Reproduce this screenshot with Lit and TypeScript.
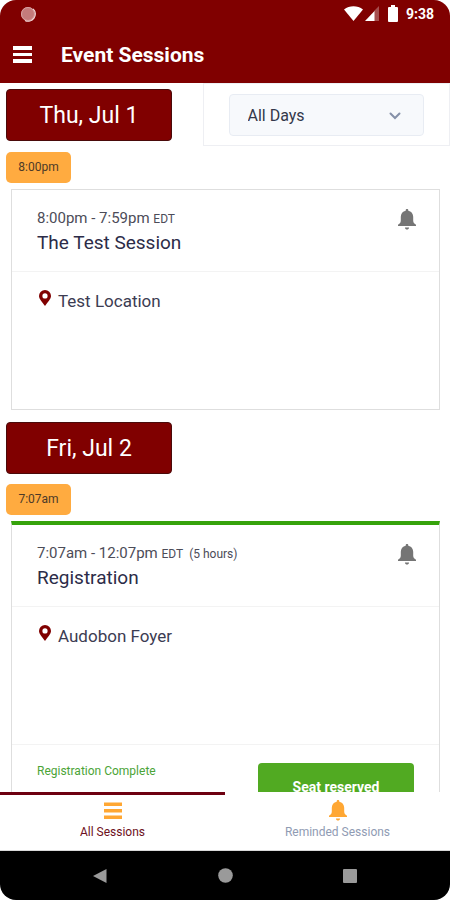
import { LitElement, html, css, svg, nothing } from "lit";
import { customElement, property, state } from "lit/decorators.js";
import { classMap } from "lit/directives/class-map.js";

interface Session {
  start: string;
  range: string;
  zone: string;
  duration?: string;
  title: string;
  location: string;
  status?: string;
}

interface Day {
  label: string;
  sessions: Session[];
}

const DAYS: Day[] = [
  {
    label: "Thu, Jul 1",
    sessions: [
      {
        start: "8:00pm",
        range: "8:00pm - 7:59pm",
        zone: "EDT",
        title: "The Test Session",
        location: "Test Location",
      },
    ],
  },
  {
    label: "Fri, Jul 2",
    sessions: [
      {
        start: "7:07am",
        range: "7:07am - 12:07pm",
        zone: "EDT",
        duration: "(5 hours)",
        title: "Registration",
        location: "Audobon Foyer",
        status: "Registration Complete",
      },
    ],
  },
];

const bell = svg`<path fill="currentColor" d="M9 0c.8 0 1.300.5 1.300 1.300v.4c3 .6 4.900 3 4.900 6.100v3.700c0 1.800.8 3.200 2.800 4.200v1.300H0v-1.300c2-1 2.800-2.400 2.800-4.200V7.800c0-3.100 1.900-5.500 4.900-6.100v-.4C7.700.5 8.200 0 9 0zM6.900 18.400h4.200c-.2 1.400-1 2.100-2.100 2.100s-1.900-.7-2.100-2.100z"/>`;

@customElement("session-card")
export class SessionCard extends LitElement {
  @property({ attribute: false }) session!: Session;

  static styles = css`
    :host {
      display: block;
      margin: 6px 10px 0 11px;
    }
    .card {
      border: 1px solid #dedede;
      background: #fff;
    }
    .reserved {
      border-top: 4px solid #36a30c;
    }
    .head {
      display: flex;
      justify-content: space-between;
      align-items: flex-start;
      padding: 16px 23px 16px 25px;
      border-bottom: 1px solid #f3f3f3;
    }
    .when {
      margin: 0;
      font-size: 15px;
      line-height: 24px;
      color: #4c4c58;
    }
    .zone {
      font-size: 12px;
    }
    .title {
      margin: 0;
      font-size: 19px;
      font-weight: 400;
      line-height: 24px;
      color: #2c2c48;
    }
    .remind {
      display: flex;
      padding: 0;
      margin-top: 3px;
      border: 0;
      background: none;
      color: #757575;
    }
    .body {
      display: flex;
      align-items: flex-start;
      gap: 7px;
      min-height: 120px;
      padding: 17px 25px 0 27px;
      font-size: 17px;
      line-height: 24px;
      color: #3c3c52;
    }
    .pin {
      flex: none;
      margin-top: 1px;
    }
    .foot {
      display: flex;
      justify-content: space-between;
      align-items: flex-start;
      padding: 18px 25px;
      border-top: 1px solid #f3f3f3;
    }
    .status {
      font-size: 12px;
      line-height: 16px;
      color: #4ba437;
    }
    .seat {
      width: 156px;
      height: 48px;
      border: 0;
      border-radius: 4px;
      background: #51aa22;
      color: #fff;
      font: 700 14px/20px Roboto, sans-serif;
    }
  `;

  render() {
    const s = this.session;
    return html`
      <article class=${classMap({ card: true, reserved: !!s.status })}>
        <header class="head">
          <div>
            <p class="when">
              ${s.range} <span class="zone">${s.zone}${s.duration ? html`&nbsp; ${s.duration}` : nothing}</span>
            </p>
            <h3 class="title">${s.title}</h3>
          </div>
          <button class="remind" aria-label="Remind me">
            <svg width="18" height="21" viewBox="0 0 18 21">${bell}</svg>
          </button>
        </header>
        <div class="body">
          <svg class="pin" width="12" height="16" viewBox="0 0 12 16">
            <path
              fill="#800000"
              fill-rule="evenodd"
              d="M6 0a6 6 0 0 1 6 6c0 3-3 5.500-6 10C3 11.500 0 9 0 6a6 6 0 0 1 6-6zm0 3.300a2.600 2.600 0 1 0 0 5.200 2.600 2.600 0 0 0 0-5.200z"
            />
          </svg>
          <span>${s.location}</span>
        </div>
        ${s.status
          ? html`<footer class="foot">
              <span class="status">${s.status}</span>
              <button class="seat">Seat reserved</button>
            </footer>`
          : nothing}
      </article>
    `;
  }
}

@customElement("app-root")
export class AppRoot extends LitElement {
  @state() private tab: "all" | "reminded" = "all";

  static styles = css`
    :host {
      display: flex;
      flex-direction: column;
      height: 100vh;
      overflow: hidden;
      border-radius: 16px;
      background: #fff;
      font-family: Roboto, sans-serif;
    }
    .top {
      flex: none;
      background: #800000;
      color: #fff;
    }
    .statusbar {
      display: flex;
      align-items: center;
      justify-content: space-between;
      height: 27px;
      padding: 0 16px 0 20px;
    }
    .indicators {
      display: flex;
      align-items: center;
      font-size: 14px;
      font-weight: 700;
    }
    .signal {
      margin-left: 2px;
    }
    .battery {
      margin: 0 8px 0 9px;
    }
    .appbar {
      display: flex;
      align-items: center;
      gap: 28px;
      height: 56px;
      padding: 0 13px;
    }
    .menu {
      display: flex;
      padding: 0;
      border: 0;
      background: none;
      color: #fff;
    }
    .heading {
      margin: 0;
      font-size: 21px;
      font-weight: 700;
      line-height: 24px;
    }
    .list {
      flex: 1;
      min-height: 0;
      overflow-y: auto;
      scrollbar-width: none;
    }
    .dayrow {
      display: flex;
      justify-content: space-between;
      align-items: flex-start;
    }
    .day {
      box-sizing: border-box;
      width: 166px;
      margin: 6px 0 0 6px;
      padding-top: 2px;
      border: 1px solid #4a0a0a;
      border-radius: 4px;
      background: #800000;
      color: #fff;
      font-size: 23px;
      font-weight: 400;
      line-height: 48px;
      text-align: center;
    }
    .later .day {
      margin-top: 12px;
    }
    .filter {
      box-sizing: border-box;
      position: relative;
      width: 55%;
      padding: 10px 25px 9px;
      border: 1px solid #eeeff3;
    }
    .select {
      appearance: none;
      box-sizing: border-box;
      display: block;
      width: 100%;
      height: 42px;
      padding: 2px 18px 0;
      border: 1px solid #e8ecf3;
      border-radius: 4px;
      background: #f7f9fc;
      color: #33384a;
      font: 400 16px/20px Roboto, sans-serif;
    }
    .chevron {
      position: absolute;
      right: 48px;
      top: 28px;
      pointer-events: none;
    }
    .chip {
      display: block;
      width: 65px;
      margin: 6px 0 0 6px;
      border-radius: 5px;
      background: #ffab40;
      color: #4c3a28;
      font-size: 12px;
      line-height: 31px;
      text-align: center;
    }
    .later .chip {
      margin-top: 10px;
    }
    .tabs {
      flex: none;
      display: grid;
      grid-template-columns: 1fr 1fr;
      border-bottom: 1px solid #d9d9d9;
    }
    .tab {
      display: flex;
      flex-direction: column;
      align-items: center;
      gap: 3px;
      height: 58px;
      padding: 5px 0 0;
      border: 0;
      border-top: 3px solid transparent;
      background: #fff;
      color: #8f9bb3;
      font: 400 12px/16px Roboto, sans-serif;
    }
    .active {
      border-top-color: #6d0010;
      color: #6d1020;
    }
    .glyph {
      color: #ffa733;
    }
    .navbar {
      flex: none;
      display: grid;
      grid-template-columns: repeat(3, 125px);
      justify-content: center;
      height: 49px;
      background: #000;
    }
    .key {
      display: grid;
      place-items: center;
      padding: 0;
      border: 0;
      background: none;
    }
  `;

  render() {
    return html`
      <div class="top">
        <div class="statusbar">
          <svg width="16" height="16" viewBox="0 0 16 16">
            <circle cx="8" cy="8" r="7" fill="#c47b7b" />
            <path d="M13 3a7 7 0 0 1-8 11.300" fill="none" stroke="#f3dcdc" stroke-width="1.500" />
            <circle cx="8" cy="8" r="6.500" fill="none" stroke="#d9a3a3" stroke-width="1" />
          </svg>
          <div class="indicators">
            <svg width="19" height="15" viewBox="0 0 19 15">
              <path fill="#fff" d="M0 3.500C5.500-.9 13.500-.9 19 3.500L9.500 15z" />
            </svg>
            <svg class="signal" width="14" height="15" viewBox="0 0 14 15">
              <path fill="#a64d4d" d="M14 0v15H9V5z" />
              <path fill="#fff" d="M9.500 5v10H0z" />
            </svg>
            <svg class="battery" width="10" height="17" viewBox="0 0 10 17">
              <path
                fill="#fff"
                d="M3 0h4v2h2a1 1 0 0 1 1 1v13a1 1 0 0 1-1 1H1a1 1 0 0 1-1-1V3a1 1 0 0 1 1-1h2z"
              />
            </svg>
            <span>9:38</span>
          </div>
        </div>
        <header class="appbar">
          <button class="menu" aria-label="Menu">
            <svg width="20" height="18" viewBox="0 0 20 18">
              <path fill="currentColor" d="M0 0h19v4H0zM0 7h19v3H0zM0 13h19v4H0z" />
            </svg>
          </button>
          <h1 class="heading">Event Sessions</h1>
        </header>
      </div>

      <main class="list">
        ${DAYS.map(
          (day, i) => html`
            <section class=${classMap({ later: i > 0 })}>
              <div class="dayrow">
                <h2 class="day">${day.label}</h2>
                ${i === 0
                  ? html`<div class="filter">
                      <select class="select" aria-label="Filter by day">
                        <option>All Days</option>
                        ${DAYS.map((d) => html`<option>${d.label}</option>`)}
                      </select>
                      <svg class="chevron" width="12" height="8" viewBox="0 0 12 8">
                        <path d="M1.500 1.500 6 6l4.500-4.500" fill="none" stroke="#8590a8" stroke-width="2" stroke-linecap="round" />
                      </svg>
                    </div>`
                  : nothing}
              </div>
              ${day.sessions.map(
                (s) => html`<span class="chip">${s.start}</span><session-card .session=${s}></session-card>`
              )}
            </section>
          `
        )}
      </main>

      <nav class="tabs">
        <button class=${classMap({ tab: true, active: this.tab === "all" })} @click=${() => (this.tab = "all")}>
          <svg class="glyph" width="18" height="21" viewBox="0 0 18 21">
            <path fill="currentColor" d="M0 2.500h18v3.500H0zM0 9h18v3.500H0zM0 15.500h18V19H0z" />
          </svg>
          All Sessions
        </button>
        <button
          class=${classMap({ tab: true, active: this.tab === "reminded" })}
          @click=${() => (this.tab = "reminded")}
        >
          <svg class="glyph" width="18" height="21" viewBox="0 0 18 21">${bell}</svg>
          Reminded Sessions
        </button>
      </nav>

      <div class="navbar">
        <button class="key" aria-label="Back">
          <svg width="14" height="14" viewBox="0 0 14 14"><path fill="#9a9a9a" d="M13.500 0v14L0 7z" /></svg>
        </button>
        <button class="key" aria-label="Home">
          <svg width="15" height="15" viewBox="0 0 15 15"><circle cx="7.500" cy="7.500" r="7.300" fill="#9a9a9a" /></svg>
        </button>
        <button class="key" aria-label="Recent apps">
          <svg width="14" height="14" viewBox="0 0 14 14"><rect width="14" height="14" rx="1" fill="#9a9a9a" /></svg>
        </button>
      </div>
    `;
  }
}
